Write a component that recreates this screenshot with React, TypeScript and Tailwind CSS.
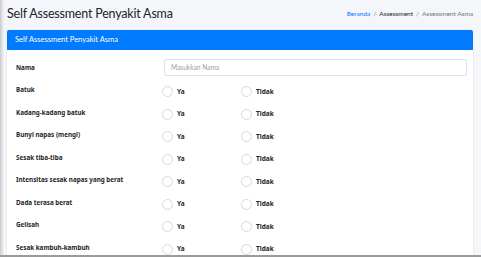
import React from "react";

const rows = [
  "Batuk",
  "Kadang-kadang batuk",
  "Bunyi napas (mengi)",
  "Sesak tiba-tiba",
  "Intensitas sesak napas yang berat",
  "Dada terasa berat",
  "Gelisah",
  "Sesak kambuh-kambuh",
];

const noto = { fontFamily: '"Noto Sans", sans-serif' };

function Radio({ label }: { label: string }) {
  return (
    <div className="flex items-center h-[11px]">
      <span className="w-[11px] h-[11px] rounded-full border border-[#d6d9dc] bg-white" />
      <span className="ml-[4px] text-[6.5px] font-bold text-[#212529]" style={noto}>
        {label}
      </span>
    </div>
  );
}

export default function App() {
  return (
    <div
      className="w-[481px] h-[257px] overflow-hidden flex flex-col bg-[#f4f6f9]"
      style={{ fontFamily: 'Lato, "Noto Sans", sans-serif' }}
    >
      <div className="flex flex-1 min-h-0">
        <div className="w-[4px] shrink-0 bg-gradient-to-r from-[#c8cacd] to-[#f4f6f9]" />
        <div className="flex-1 flex flex-col pl-[3px] pr-[8px] min-h-0">
          <div className="shrink-0 flex items-center justify-between h-[30px] pb-[2px]">
            <h1 className="text-[12.5px] tracking-[-0.2px] text-[#212529] leading-none">
              Self Assessment Penyakit Asma
            </h1>
            <div className="flex items-center text-[6.5px] text-[#6c757d]">
              <span className="text-[#007bff]">Beranda</span>
              <span className="mx-[3px]">/</span>
              <span className="text-[#212529]">Assessment</span>
              <span className="mx-[3px]">/</span>
              <span>Assessment Asma</span>
            </div>
          </div>
          <div className="flex-1 bg-white flex flex-col shadow-[0_0_1px_rgba(0,0,0,0.2)] min-h-0">
            <div className="shrink-0 h-[20px] bg-[#007bff] rounded-t-[2px] flex items-center px-[8px] text-[7.5px] text-white">
              Self Assessment Penyakit Asma
            </div>
            <div className="pl-[9px] pr-[6px] pt-[9px] flex flex-col">
              <div className="shrink-0 flex items-center h-[17px] mb-[7px]">
                <div className="w-[148px] text-[6.3px] font-bold text-[#212529]" style={noto}>
                  Nama
                </div>
                <div className="flex-1 h-[17px] border border-[#dfe2e6] rounded-[2px] flex items-center px-[6px] text-[6.6px] text-[#9aa0a6]">
                  Masukkan Nama
                </div>
              </div>
              {rows.map((r) => (
                <div key={r} className="shrink-0 flex items-start h-[22.5px] pt-[2px]">
                  <div
                    className="w-[146px] text-[6.3px] font-bold text-[#212529] leading-[10px]"
                    style={noto}
                  >
                    {r}
                  </div>
                  <div className="flex items-start pt-[1px]">
                    <div className="w-[79px]">
                      <Radio label="Ya" />
                    </div>
                    <Radio label="Tidak" />
                  </div>
                </div>
              ))}
            </div>
          </div>
        </div>
      </div>
      <div className="h-[2px] shrink-0 bg-[#9b9b9b]" />
    </div>
  );
}
